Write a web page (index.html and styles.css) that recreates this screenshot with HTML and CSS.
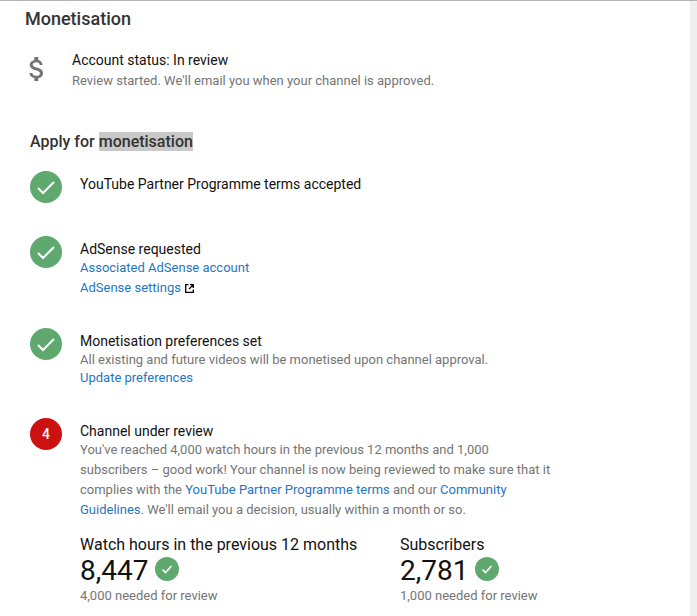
FILE: index.html
```html
<!DOCTYPE html>
<html lang="en">
<head>
<meta charset="UTF-8">
<meta name="viewport" content="width=device-width, initial-scale=1.0">
<title>Monetisation</title>
<link rel="stylesheet" href="styles.css">
</head>
<body>

<div class="page">
  <main class="content">
    <h1 class="page-title">Monetisation</h1>

    <!-- account status -->
    <section class="status">
      <svg class="dollar" width="32" height="32" viewBox="0 0 24 24"><path d="M11.800 10.900c-2.270-.59-3-1.200-3-2.150 0-1.090 1.010-1.850 2.700-1.850 1.780 0 2.440.85 2.500 2.100h2.210c-.07-1.720-1.120-3.300-3.210-3.810V3h-3v2.160c-1.940.42-3.500 1.680-3.500 3.610 0 2.310 1.910 3.460 4.700 4.130 2.500.6 3 1.480 3 2.410 0 .69-.49 1.790-2.700 1.790-2.060 0-2.870-.92-2.980-2.100h-2.200c.12 2.190 1.760 3.420 3.680 3.830V21h3v-2.150c1.950-.37 3.500-1.500 3.500-3.550 0-2.840-2.430-3.810-4.700-4.400z" fill="#757575"/></svg>
      <div>
        <div class="line-dark">Account status: In review</div>
        <div class="line-grey status-note">Review started. We'll email you when your channel is approved.</div>
      </div>
    </section>

    <h2 class="apply-title">Apply for <span class="selected">monetisation</span></h2>

    <!-- steps -->
    <section class="step step-1">
      <span class="badge"><svg width="32" height="32" viewBox="0 0 32 32"><path d="M8 17l5 5 11-11" fill="none" stroke="#fff" stroke-width="2"/></svg></span>
      <div class="step-body">
        <div class="line-dark">YouTube Partner Programme terms accepted</div>
      </div>
    </section>

    <section class="step step-2">
      <span class="badge"><svg width="32" height="32" viewBox="0 0 32 32"><path d="M8 17l5 5 11-11" fill="none" stroke="#fff" stroke-width="2"/></svg></span>
      <div class="step-body">
        <div class="line-dark">AdSense requested</div>
        <a class="link link-row link-first" href="#">Associated AdSense account</a>
        <a class="link link-row link-second" href="#">AdSense settings
          <svg class="external" width="9" height="9" viewBox="0 0 9 9"><path d="M3.500.7H.7v7.600h7.600V5.500M5 .7h3.300V4M8.300.7L4 5" fill="none" stroke="#000" stroke-width="1.300"/></svg>
        </a>
      </div>
    </section>

    <section class="step step-3">
      <span class="badge"><svg width="32" height="32" viewBox="0 0 32 32"><path d="M8 17l5 5 11-11" fill="none" stroke="#fff" stroke-width="2"/></svg></span>
      <div class="step-body">
        <div class="line-dark">Monetisation preferences set</div>
        <div class="line-grey prefs-note">All existing and future videos will be monetised upon channel approval.</div>
        <a class="link link-row" href="#">Update preferences</a>
      </div>
    </section>

    <section class="step step-4">
      <span class="badge badge-red">4</span>
      <div class="step-body">
        <div class="line-dark">Channel under review</div>
        <p class="review-text">You've reached 4,000 watch hours in the previous 12 months and 1,000 subscribers – good work! Your channel is now being reviewed to make sure that it complies with the <a class="link" href="#">YouTube Partner Programme terms</a> and our <a class="link" href="#">Community Guidelines</a>. We'll email you a decision, usually within a month or so.</p>

        <div class="stats">
          <div class="stat stat-hours">
            <div class="stat-label">Watch hours in the previous 12 months</div>
            <div class="stat-value">8,447 <span class="badge badge-small"><svg width="24" height="24" viewBox="0 0 24 24"><path d="M7.500 12.500l3 3 6-6.500" fill="none" stroke="#fff" stroke-width="1.600"/></svg></span></div>
            <div class="line-grey">4,000 needed for review</div>
          </div>
          <div class="stat">
            <div class="stat-label">Subscribers</div>
            <div class="stat-value">2,781 <span class="badge badge-small"><svg width="24" height="24" viewBox="0 0 24 24"><path d="M7.500 12.500l3 3 6-6.500" fill="none" stroke="#fff" stroke-width="1.600"/></svg></span></div>
            <div class="line-grey">1,000 needed for review</div>
          </div>
        </div>
      </div>
    </section>
  </main>
  <div class="scroll-track"></div>
</div>

</body>
</html>
```

FILE: styles.css
```css
/* page frame */
html, body {
  margin: 0;
  padding: 0;
  height: 100%;
  overflow: hidden;
  background: #fff;
}

body {
  font-family: Roboto, "Liberation Sans", sans-serif;
  font-size: 13px;
  color: #111;
}

.page {
  display: flex;
  height: 616px;
  border-top: 1px solid #b4b4b4;
  box-sizing: border-box;
}

.content {
  flex: 1;
  padding: 8px 0 0 30px;
  min-width: 0;
}

.scroll-track {
  width: 7px;
  background: #efefef;
}

/* headings */
.page-title {
  margin: 0 0 0 -5px;
  font-size: 18px;
  line-height: 19px;
  font-weight: 500;
  color: #333;
}

.apply-title {
  margin: 42px 0 0;
  font-size: 16px;
  line-height: 19px;
  font-weight: 500;
  color: #333;
}

.selected {
  background: #c8c8c8;
}

/* account status */
.status {
  display: flex;
  gap: 19px;
  margin: 24px 0 0 -5px;
}

.dollar {
  flex: none;
  margin: 1px 0 0 -4px;
}

.status-note {
  margin-top: 4px;
}

.line-dark {
  font-size: 14px;
  line-height: 16px;
  color: #111;
}

.line-grey {
  font-size: 13px;
  line-height: 18px;
  color: #757575;
}

/* steps */
.step {
  display: flex;
  gap: 18px;
}

.step-1 { margin-top: 20px; }
.step-2 { margin-top: 33px; }
.step-3 { margin-top: 31px; }
.step-4 { margin-top: 31px; }

.step-body {
  padding-top: 5px;
  min-width: 0;
}

.badge {
  flex: none;
  display: flex;
  align-items: center;
  justify-content: center;
  width: 32px;
  height: 32px;
  border-radius: 50%;
  background: #5fa96f;
}

.badge-red {
  background: #cc1111;
  color: #fff;
  font-size: 14px;
  font-weight: 500;
}

.badge-small {
  display: inline-flex;
  width: 24px;
  height: 24px;
  margin-bottom: 4px;
}

.link {
  color: #1f76c0;
  text-decoration: none;
}

.link-row {
  display: block;
  font-size: 13px;
  line-height: 18px;
}

.link-first {
  margin-top: 2px;
}

.link-second {
  margin-top: 2px;
}

.prefs-note {
  margin-top: 2px;
}

.external {
  margin-left: 1px;
  vertical-align: -1px;
}

.review-text {
  margin: 1px 0 0;
  width: 472px;
  font-size: 13px;
  line-height: 20px;
  color: #757575;
}

/* stats under the last step */
.stats {
  display: flex;
  margin-top: 15px;
}

.stat-hours {
  width: 320px;
}

.stat-label {
  font-size: 16px;
  line-height: 19px;
  color: #111;
}

.stat-value {
  display: flex;
  align-items: center;
  gap: 7px;
  font-size: 28px;
  line-height: 33px;
  color: #111;
}
```
